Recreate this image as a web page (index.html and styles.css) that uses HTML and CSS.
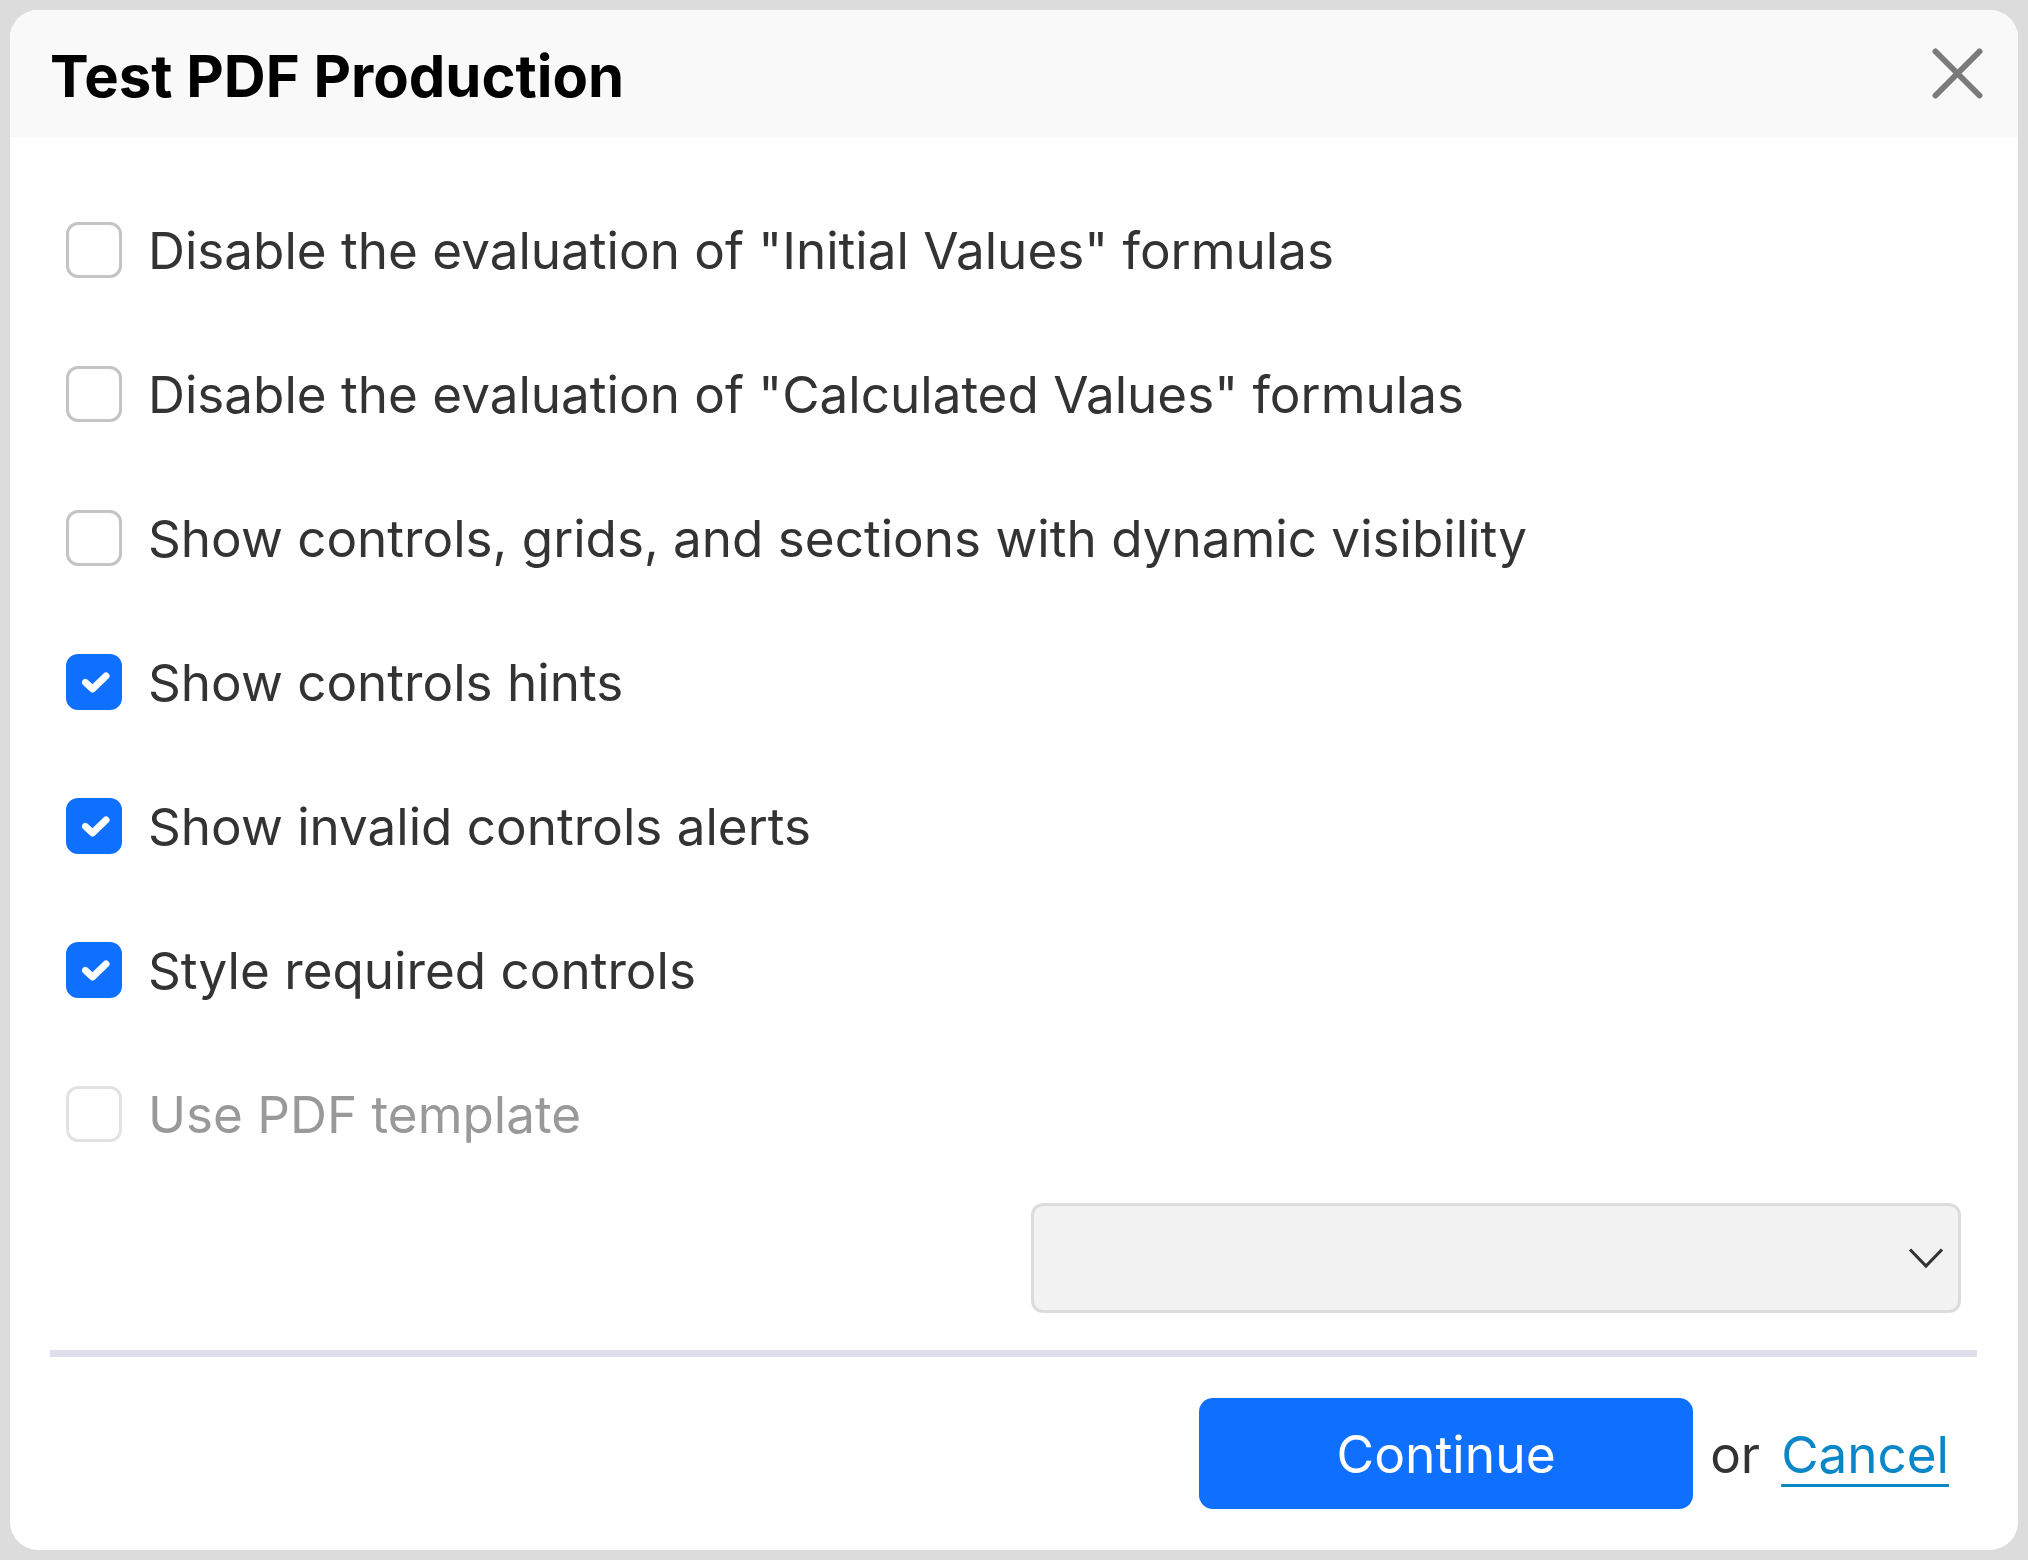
FILE: index.html
```html
<!DOCTYPE html>
<html lang="en">
<head>
<meta charset="utf-8">
<title>Test PDF Production</title>
<link rel="stylesheet" href="styles.css">
</head>
<body>
<div class="dialog">
  <div class="header">
    <h1 class="title">Test PDF Production</h1>
    <button class="close" aria-label="Close">
      <svg width="51" height="51" viewBox="0 0 51 51"><path d="M3.5 3.5 L47.5 47.5 M47.5 3.5 L3.5 47.5" stroke="#7a7a7a" stroke-width="6" stroke-linecap="round" fill="none"/></svg>
    </button>
  </div>
  <div class="body">
    <label class="row"><span class="box"></span><span class="label">Disable the evaluation of "Initial Values" formulas</span></label>
    <label class="row"><span class="box"></span><span class="label">Disable the evaluation of "Calculated Values" formulas</span></label>
    <label class="row"><span class="box"></span><span class="label">Show controls, grids, and sections with dynamic visibility</span></label>
    <label class="row"><span class="box checked"><svg width="56" height="56" viewBox="0 0 56 56"><path d="M19.5 28.5 L26.5 35 L40 22" stroke="#fff" stroke-width="7" stroke-linecap="round" stroke-linejoin="round" fill="none"/></svg></span><span class="label">Show controls hints</span></label>
    <label class="row"><span class="box checked"><svg width="56" height="56" viewBox="0 0 56 56"><path d="M19.5 28.5 L26.5 35 L40 22" stroke="#fff" stroke-width="7" stroke-linecap="round" stroke-linejoin="round" fill="none"/></svg></span><span class="label">Show invalid controls alerts</span></label>
    <label class="row"><span class="box checked"><svg width="56" height="56" viewBox="0 0 56 56"><path d="M19.5 28.5 L26.5 35 L40 22" stroke="#fff" stroke-width="7" stroke-linecap="round" stroke-linejoin="round" fill="none"/></svg></span><span class="label">Style required controls</span></label>
    <label class="row disabled"><span class="box"></span><span class="label">Use PDF template</span></label>
    <div class="select-row">
      <div class="select">
        <svg class="chevron" width="36" height="22" viewBox="0 0 36 22"><path d="M2 2.5 L18 19 L34 2.5" stroke="#333" stroke-width="3.2" fill="none"/></svg>
      </div>
    </div>
  </div>
  <div class="divider"></div>
  <div class="footer">
    <button class="continue">Continue</button>
    <span class="or">or</span>
    <a class="cancel" href="#">Cancel</a>
  </div>
</div>
</body>
</html>
```

FILE: styles.css
```css
html, body {
  margin: 0;
  padding: 0;
}
body {
  background: #dcdcdc;
  padding: 10px;
  font-family: Inter, "Liberation Sans", sans-serif;
}
.dialog {
  width: 2008px;
  height: 1540px;
  background: #fff;
  border-radius: 28px;
  overflow: hidden;
  display: flex;
  flex-direction: column;
}
.header {
  height: 127px;
  flex: none;
  background: #f9f9f9;
  display: flex;
  align-items: center;
  justify-content: space-between;
  padding: 4px 35px 0 40px;
  box-sizing: border-box;
}
.title {
  margin: 0;
  font-size: 58px;
  font-weight: 700;
  color: #000;
  letter-spacing: 0;
}
.close {
  border: 0;
  background: none;
  padding: 0;
  width: 51px;
  height: 51px;
  display: block;
  margin-top: -4px;
}
.close svg { display: block; }
.body {
  padding: 41px 57px 0 56px;
  display: flex;
  flex-direction: column;
}
.row {
  height: 144px;
  display: flex;
  align-items: center;
  gap: 26px;
}
.box {
  width: 56px;
  height: 56px;
  box-sizing: border-box;
  border: 3px solid #c4c4c4;
  border-radius: 12px;
  flex: none;
  position: relative;
}
.box.checked {
  background: #0f6fff;
  border-color: #0f6fff;
}
.box.checked svg {
  position: absolute;
  left: -3px;
  top: -3px;
}
.label {
  font-size: 51.2px;
  color: #333;
}
.row.disabled .box { border-color: #e2e2e2; }
.row.disabled .label { color: #999; }
.select-row {
  display: flex;
  justify-content: flex-end;
  margin-top: 17px;
}
.select {
  width: 930px;
  height: 110px;
  box-sizing: border-box;
  background: #f2f2f2;
  border: 3px solid #dcdcdc;
  border-radius: 12px;
  display: flex;
  align-items: center;
  justify-content: flex-end;
  padding-right: 14px;
}
.chevron { display: block; }
.divider {
  height: 7px;
  background: #dedeec;
  margin: 37px 41px 0 40px;
}
.footer {
  display: flex;
  justify-content: flex-end;
  align-items: center;
  padding: 41px 69px 0 0;
}
.continue {
  width: 494px;
  height: 111px;
  border: 0;
  border-radius: 14px;
  background: #0f6fff;
  color: #fff;
  font-family: Inter, "Liberation Sans", sans-serif;
  font-size: 51.5px;
  padding: 0;
}
.or {
  font-size: 51.2px;
  color: #333;
  margin-left: 17px;
}
.cancel {
  font-size: 51.2px;
  color: #0a87c9;
  margin-left: 21px;
  text-decoration: underline;
  text-decoration-thickness: 3px;
  text-underline-offset: 11px;
}
```
